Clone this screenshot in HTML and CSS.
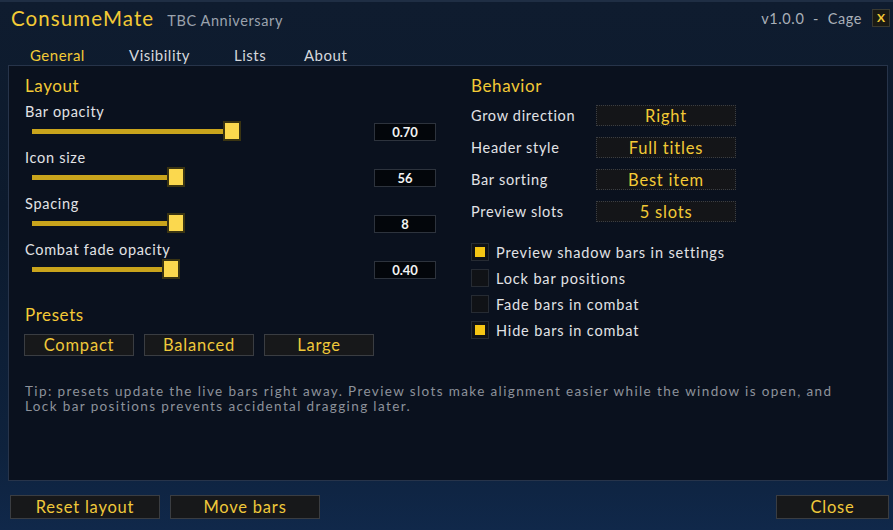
FILE: index.html
```html
<!DOCTYPE html>
<html lang="en">
<head>
<meta charset="utf-8">
<title>ConsumeMate</title>
<link rel="stylesheet" href="styles.css">
</head>
<body>
<div class="window">
  <header class="titlebar">
    <div class="title">
      <span class="app-name">ConsumeMate</span>
      <span class="edition">TBC Anniversary</span>
    </div>
    <div class="meta">
      <span class="version">v1.0.0&nbsp;&nbsp;-&nbsp;&nbsp;Cage</span>
      <button class="close-x">X</button>
    </div>
  </header>

  <nav class="tabs">
    <span class="tab active">General</span>
    <span class="tab">Visibility</span>
    <span class="tab">Lists</span>
    <span class="tab">About</span>
  </nav>

  <main class="panel">
    <div class="columns">
      <section class="col-left">
        <h2 class="heading">Layout</h2>
        <div class="slider-row">
          <div class="slider-label">Bar opacity</div>
          <div class="slider-line">
            <div class="track-area"><div class="track" style="width:200px"><span class="thumb"></span></div></div>
            <div class="value">0.70</div>
          </div>
        </div>
        <div class="slider-row">
          <div class="slider-label">Icon size</div>
          <div class="slider-line">
            <div class="track-area"><div class="track" style="width:144px"><span class="thumb"></span></div></div>
            <div class="value">56</div>
          </div>
        </div>
        <div class="slider-row">
          <div class="slider-label">Spacing</div>
          <div class="slider-line">
            <div class="track-area"><div class="track" style="width:144px"><span class="thumb"></span></div></div>
            <div class="value">8</div>
          </div>
        </div>
        <div class="slider-row">
          <div class="slider-label">Combat fade opacity</div>
          <div class="slider-line">
            <div class="track-area"><div class="track" style="width:139px"><span class="thumb"></span></div></div>
            <div class="value">0.40</div>
          </div>
        </div>

        <h2 class="heading presets-heading">Presets</h2>
        <div class="presets">
          <button class="btn preset">Compact</button>
          <button class="btn preset">Balanced</button>
          <button class="btn preset">Large</button>
        </div>
      </section>

      <section class="col-right">
        <h2 class="heading">Behavior</h2>
        <div class="options">
          <span class="opt-label">Grow direction</span><button class="select">Right</button>
          <span class="opt-label">Header style</span><button class="select">Full titles</button>
          <span class="opt-label">Bar sorting</span><button class="select">Best item</button>
          <span class="opt-label">Preview slots</span><button class="select">5 slots</button>
        </div>
        <ul class="checks">
          <li class="check"><span class="box on"></span>Preview shadow bars in settings</li>
          <li class="check"><span class="box"></span>Lock bar positions</li>
          <li class="check"><span class="box"></span>Fade bars in combat</li>
          <li class="check"><span class="box on"></span>Hide bars in combat</li>
        </ul>
      </section>
    </div>

    <p class="tip">Tip: presets update the live bars right away. Preview slots make alignment easier while the window is open, and<br>Lock bar positions prevents accidental dragging later.</p>
  </main>

  <footer class="footer">
    <div class="footer-left">
      <button class="btn wide">Reset layout</button>
      <button class="btn wide">Move bars</button>
    </div>
    <button class="btn close">Close</button>
  </footer>
</div>
</body>
</html>
```

FILE: styles.css
```css
* { box-sizing: border-box; }

html, body {
  margin: 0;
  padding: 0;
}

body {
  width: 893px;
  height: 530px;
  overflow: hidden;
  font-family: "Lato", "Liberation Sans", sans-serif;
  background: #0b1628;
}

.window {
  width: 893px;
  height: 530px;
  display: flex;
  flex-direction: column;
  background: linear-gradient(180deg, #0f1c2f 0%, #0c1a2d 40%, #0e223d 85%, #10284a 100%);
  border-top: 2px solid #1f2e44;
}

/* title bar */
.titlebar {
  height: 32px;
  display: flex;
  align-items: center;
  justify-content: space-between;
  padding: 0 3px 0 11px;
}

.title {
  display: flex;
  align-items: baseline;
  gap: 13px;
}

.app-name {
  color: #f3ca36;
  font-size: 20.5px;
  letter-spacing: 1.1px;
}

.edition {
  color: #9ba2ad;
  font-size: 14.5px;
  letter-spacing: 0.6px;
}

.meta {
  display: flex;
  align-items: center;
  gap: 10px;
}

.version {
  color: #a9afb8;
  font-size: 14.5px;
  letter-spacing: 0.6px;
}

.close-x {
  width: 18px;
  height: 18px;
  padding: 0;
  border: 1px solid #3a3a30;
  background: #1a1a14;
  color: #f3ca36;
  font-family: inherit;
  font-weight: 700;
  font-size: 12px;
  line-height: 16px;
}

/* tabs */
.tabs {
  height: 31px;
  display: flex;
  align-items: center;
  padding-left: 30px;
  padding-top: 11px;
}

.tab {
  color: #d4d7dc;
  font-size: 15px;
  letter-spacing: 0.5px;
}
.tab:nth-child(1) { width: 99px; }
.tab:nth-child(2) { width: 105px; }
.tab:nth-child(3) { width: 70px; }
.tab.active { color: #f3ca36; }

/* main panel */
.panel {
  margin: 0 5px 0 8px;
  height: 416px;
  background: #0a111e;
  border: 1px solid #27344a;
  padding: 10px 16px 0 16px;
  display: flex;
  flex-direction: column;
}

.columns {
  display: grid;
  grid-template-columns: 446px 1fr;
}

.heading {
  margin: 0;
  color: #f3ca36;
  font-weight: 400;
  font-size: 17px;
  letter-spacing: 0.6px;
  line-height: 20px;
}

.slider-row {
  height: 46px;
}
.col-left > .heading:first-child { margin-bottom: 7px; }

.slider-label {
  color: #e2e3e6;
  font-size: 14.5px;
  letter-spacing: 0.7px;
  line-height: 18px;
}

.slider-line {
  display: flex;
  align-items: center;
  height: 20px;
}

.track-area {
  width: 349px;
  padding-left: 7px;
}

.track {
  position: relative;
  height: 5px;
  background: #c9a41c;
}

.thumb {
  position: absolute;
  right: -9px;
  top: -8px;
  width: 18px;
  height: 20px;
  background: #fbd84e;
  border: 2px solid #3a3412;
}

.value {
  width: 62px;
  height: 18px;
  background: #03060b;
  border: 1px solid #2d333d;
  color: #f3f3f3;
  font-size: 13px;
  font-weight: 700;
  text-align: center;
  line-height: 16px;
  margin-top: 2px;
}

.presets-heading {
  margin-top: 18px;
}

.presets {
  display: flex;
  gap: 10px;
  margin-top: 9px;
  margin-left: -1px;
}

.btn {
  font-family: inherit;
  background: #17181a;
  border: 1px solid #3a3d42;
  color: #f0c93a;
  padding: 0;
  font-size: 16.5px;
  letter-spacing: 0.8px;
}

.preset {
  width: 110px;
  height: 22px;
  line-height: 19px;
}

/* right column */
.col-right {
  padding-left: 0;
}

.options {
  display: grid;
  grid-template-columns: 125px 140px;
  row-gap: 11px;
  margin-top: 9px;
  align-items: center;
}

.opt-label {
  color: #e2e3e6;
  font-size: 14.5px;
  letter-spacing: 0.7px;
}

.select {
  height: 21px;
  font-family: inherit;
  background: #141518;
  border: 1px dotted #3b3e43;
  color: #f3ca36;
  font-size: 16.5px;
  letter-spacing: 0.8px;
  padding: 0;
  line-height: 18px;
}

.checks {
  list-style: none;
  margin: 17px 0 0 0;
  padding: 0;
}

.check {
  display: flex;
  align-items: center;
  height: 26px;
  color: #e2e3e6;
  font-size: 14.5px;
  letter-spacing: 0.85px;
}

.box {
  width: 18px;
  height: 18px;
  margin-right: 7px;
  background: #101216;
  border: 1px solid #262b33;
  display: flex;
  align-items: center;
  justify-content: center;
}

.box.on::after {
  content: "";
  width: 10px;
  height: 10px;
  background: #f6c614;
}

.tip {
  margin: 28px 0 0 0;
  color: #8d929b;
  font-size: 13.5px;
  letter-spacing: 1.38px;
  line-height: 15px;
}

/* footer */
.footer {
  flex: 1;
  display: flex;
  align-items: center;
  justify-content: space-between;
  padding: 3px 4px 0 10px;
}

.footer-left {
  display: flex;
  gap: 10px;
}

.wide {
  width: 150px;
  height: 24px;
}

.close {
  width: 113px;
  height: 24px;
}
```
